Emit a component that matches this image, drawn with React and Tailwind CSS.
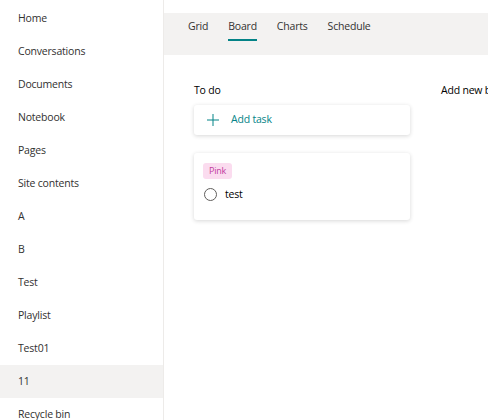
import { useState } from "react";

const navItems = [
  "Home",
  "Conversations",
  "Documents",
  "Notebook",
  "Pages",
  "Site contents",
  "A",
  "B",
  "Test",
  "Playlist",
  "Test01",
  "11",
  "Recycle bin",
];

const tabs = ["Grid", "Board", "Charts", "Schedule"];

const App = () => {
  const [active, setActive] = useState("11");
  const [tab, setTab] = useState("Board");

  return (
    <div className="flex h-[420px] w-[488px] overflow-hidden bg-white text-[10.5px] tracking-[-0.2px] text-[#323130] font-['Segoe_UI','Open_Sans',sans-serif]">
      {/* Left nav */}
      <div className="w-[164px] shrink-0 border-r border-[#edebe9] pt-[2px]">
        {navItems.map((item) => (
          <div
            key={item}
            onClick={() => setActive(item)}
            className={`flex h-[33px] items-center pl-[18px] cursor-pointer ${
              active === item ? "bg-[#f3f2f1]" : ""
            }`}
          >
            {item}
          </div>
        ))}
      </div>

      {/* Main */}
      <div className="flex-1 pt-[13px]">
        <div className="flex h-[42px] items-start gap-[20px] bg-[#f3f2f1] pl-[24px] pt-[5px]">
          {tabs.map((t) => (
            <button
              key={t}
              onClick={() => setTab(t)}
              className="flex flex-col items-center text-[#323130]"
            >
              <span className="leading-[16px]">{t}</span>
              <span
                className={`mt-[5px] h-[2px] w-full ${
                  tab === t ? "bg-[#038387]" : "bg-transparent"
                }`}
              />
            </button>
          ))}
        </div>

        <div className="flex gap-[31px] pl-[30px] pt-[27px]">
          <div className="w-[216px] shrink-0">
            <div className="mb-[7px] h-[16px] leading-[16px] text-black">To do</div>
            <div className="flex h-[30px] items-center gap-[11px] rounded-[3px] bg-white pl-[12px] text-[#038387] shadow-[0_1px_4px_rgba(0,0,0,0.16)]">
              <svg width="14" height="14" viewBox="0 0 14 14">
                <path d="M7 1v12M1 7h12" stroke="#038387" strokeWidth="1" />
              </svg>
              <span>Add task</span>
            </div>
            <div className="mt-[18px] h-[67px] rounded-[3px] bg-white px-[9px] pt-[10px] shadow-[0_1px_4px_rgba(0,0,0,0.16)]">
              <span className="inline-block rounded-[3px] bg-[#fbdcef] px-[6px] text-[9px] leading-[16px] text-[#c23d9f]">
                Pink
              </span>
              <div className="mt-[8px] flex items-center gap-[8px] pl-[1px]">
                <span className="inline-block h-[13px] w-[13px] rounded-full border border-[#605e5c]" />
                <span className="text-black">test</span>
              </div>
            </div>
          </div>
          <div className="whitespace-nowrap leading-[16px] text-black">Add new bucket</div>
        </div>
      </div>
    </div>
  );
};

export default App;
